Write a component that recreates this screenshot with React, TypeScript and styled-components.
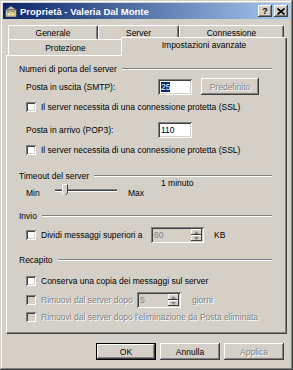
import styled, { createGlobalStyle } from 'styled-components';

const face = '#d4d0c8';
const shadow = '#808080';
const dark = '#404040';

const GlobalStyle = createGlobalStyle`
  html, body { margin: 0; padding: 0; background: ${face}; }
  body {
    font-family: 'Liberation Sans', Arial, sans-serif;
    font-size: 8.5px;
    color: #000;
  }
`;

const raised = `inset -1px -1px ${dark}, inset 1px 1px #fff, inset -2px -2px ${shadow}, inset 2px 2px ${face}`;
const sunken = `inset 1px 1px ${shadow}, inset -1px -1px #fff, inset 2px 2px ${dark}, inset -2px -2px ${face}`;

const Window = styled.div`
  box-sizing: border-box;
  width: 293px;
  height: 370px;
  padding: 3px;
  background: ${face};
  box-shadow: inset -1px -1px ${dark}, inset 1px 1px ${face}, inset -2px -2px ${shadow}, inset 2px 2px #fff;
  display: flex;
  flex-direction: column;
`;

const TitleBar = styled.div`
  height: 16px;
  display: flex;
  align-items: center;
  padding: 0 2px 0 1px;
  background: linear-gradient(to right, #0a246a, #a6caf0);
`;

const Title = styled.div`
  flex: 1;
  margin-left: 2px;
  color: #fff;
  font-weight: bold;
  font-size: 9.5px;
  white-space: nowrap;
`;

const CaptionButton = styled.div<{ $gap?: number }>`
  width: 14px;
  height: 12px;
  margin-left: ${(p) => p.$gap ?? 0}px;
  display: flex;
  align-items: center;
  justify-content: center;
  background: ${face};
  box-shadow: ${raised};
  font-weight: bold;
  font-size: 9px;
  line-height: 1;
`;

const Body = styled.div`
  flex: 1;
  display: flex;
  flex-direction: column;
  padding: 0 3px;
`;

const TabRow = styled.div<{ $h: number; $top: number }>`
  display: flex;
  align-items: flex-end;
  height: ${(p) => p.$h}px;
  margin-top: ${(p) => p.$top}px;
  padding-left: 2px;
`;

const Tab = styled.div<{ $w: number; $h: number; $active?: boolean }>`
  box-sizing: border-box;
  width: ${(p) => p.$w}px;
  height: ${(p) => p.$h}px;
  margin: ${(p) => (p.$active ? '0 0 -1px -2px' : '0')};
  position: relative;
  z-index: ${(p) => (p.$active ? 1 : 0)};
  display: flex;
  align-items: ${(p) => (p.$active ? 'flex-start' : 'center')};
  padding-top: ${(p) => (p.$active ? 2 : 0)}px;
  justify-content: center;
  background: ${face};
  border-top: 1px solid #fff;
  border-left: 1px solid #fff;
  border-right: 1px solid ${dark};
  border-radius: 2px 2px 0 0;
  box-shadow: inset -1px 0 ${shadow};
  white-space: nowrap;
`;

const Panel = styled.div`
  box-sizing: border-box;
  height: 279px;
  display: flex;
  flex-direction: column;
  padding: 0 14px 0 12px;
  border-top: 1px solid #fff;
  border-left: 1px solid #fff;
  border-right: 1px solid ${dark};
  border-bottom: 1px solid ${dark};
  box-shadow: inset -1px -1px ${shadow};
`;

const Legend = styled.div<{ $top: number }>`
  display: flex;
  align-items: center;
  height: 12px;
  margin-top: ${(p) => p.$top}px;
  white-space: nowrap;
  &::after {
    content: '';
    flex: 1;
    margin-left: 5px;
    border-top: 1px solid ${shadow};
    border-bottom: 1px solid #fff;
  }
`;

const Row = styled.div<{ $h: number; $top: number }>`
  display: flex;
  align-items: center;
  height: ${(p) => p.$h}px;
  margin-top: ${(p) => p.$top}px;
  padding-left: 7px;
  white-space: nowrap;
`;

const Label = styled.span<{ $w?: number; $gap?: number; $disabled?: boolean }>`
  width: ${(p) => (p.$w ? `${p.$w}px` : 'auto')};
  margin-left: ${(p) => p.$gap ?? 0}px;
  color: ${(p) => (p.$disabled ? shadow : '#000')};
  text-shadow: ${(p) => (p.$disabled ? '1px 1px #fff' : 'none')};
  flex-shrink: 0;
`;

const Check = styled.span<{ $disabled?: boolean }>`
  box-sizing: border-box;
  width: 10px;
  height: 10px;
  flex-shrink: 0;
  margin-right: 5px;
  background: ${(p) => (p.$disabled ? face : '#fff')};
  box-shadow: ${sunken};
`;

const Edit = styled.div<{ $w: number; $h?: number; $disabled?: boolean }>`
  box-sizing: border-box;
  width: ${(p) => p.$w}px;
  height: ${(p) => p.$h ?? 16}px;
  display: flex;
  align-items: center;
  padding: 2px 2px 2px 3px;
  background: ${(p) => (p.$disabled ? face : '#fff')};
  color: ${(p) => (p.$disabled ? shadow : '#000')};
  box-shadow: ${sunken};
  flex-shrink: 0;
`;

const EditText = styled.span`
  flex: 1;
`;

const Selected = styled.span`
  background: #0a246a;
  color: #fff;
`;

const Spin = styled.div`
  display: flex;
  flex-direction: column;
  width: 11px;
  height: 100%;
`;

const SpinButton = styled.div`
  flex: 1;
  display: flex;
  align-items: center;
  justify-content: center;
  background: ${face};
  box-shadow: inset -1px -1px ${dark}, inset 1px 1px #fff;
`;

const Arrow = ({ up }: { up?: boolean }) => (
  <svg width="5" height="3" viewBox="0 0 5 3">
    <path d={up ? 'M2.5 0 L5 3 L0 3 Z' : 'M0 0 L5 0 L2.5 3 Z'} fill={shadow} />
  </svg>
);

const Button = styled.div<{ $w: number; $disabled?: boolean; $default?: boolean }>`
  box-sizing: border-box;
  width: ${(p) => p.$w}px;
  height: 17px;
  display: flex;
  align-items: center;
  justify-content: center;
  background: ${face};
  border: ${(p) => (p.$default ? '1px solid #000' : 'none')};
  box-shadow: ${raised};
  color: ${(p) => (p.$disabled ? shadow : '#000')};
  text-shadow: ${(p) => (p.$disabled ? '1px 1px #fff' : 'none')};
  flex-shrink: 0;
`;

const ButtonBar = styled.div`
  display: flex;
  justify-content: flex-end;
  gap: 4px;
  margin-top: 9px;
  padding-right: 3px;
`;

const SliderRow = styled.div`
  display: grid;
  grid-template-columns: 29px 62px 11px 33px auto;
  grid-template-rows: 10px 12px;
  height: 22px;
  margin-top: -5px;
  padding-left: 7px;
  white-space: nowrap;
  line-height: 12px;
`;

const SliderEnd = styled.span<{ $col: number }>`
  grid-column: ${(p) => p.$col};
  grid-row: 2;
`;

const SliderValue = styled.span`
  grid-column: 5;
  grid-row: 1 / span 2;
  align-self: start;
`;

const Track = styled.div`
  position: relative;
  grid-column: 2;
  grid-row: 1 / span 2;
  align-self: end;
  height: 14px;
  margin-bottom: 1px;
  &::before {
    content: '';
    position: absolute;
    left: 0;
    right: 0;
    top: 5px;
    height: 1px;
    border-top: 1px solid ${shadow};
    border-bottom: 1px solid #fff;
    background: ${dark};
  }
`;

const Thumb = styled.svg`
  position: absolute;
  left: 7px;
  top: 0;
`;

const WindowIcon = () => (
  <svg width="14" height="13" viewBox="0 0 14 13">
    <path d="M1 5 L7 1 L13 5 Z" fill="#c0c0c0" stroke="#404040" strokeWidth="0.8" />
    <rect x="1.5" y="5" width="11" height="7" fill="#e8e8e8" stroke="#404040" strokeWidth="0.8" />
    <rect x="3" y="6.5" width="8" height="4.5" fill="#f4e9b0" stroke="#7a6a30" strokeWidth="0.6" />
    <path d="M3 6.5 L7 9 L11 6.5" fill="none" stroke="#7a6a30" strokeWidth="0.6" />
  </svg>
);

export default function App() {
  return (
    <>
      <GlobalStyle />
      <Window>
        <TitleBar>
          <WindowIcon />
          <Title>Proprietà - Valeria Dal Monte</Title>
          <CaptionButton>?</CaptionButton>
          <CaptionButton $gap={2}>
            <svg width="8" height="7" viewBox="0 0 8 7">
              <path d="M0.5 0.5 L7.5 6.5 M7.5 0.5 L0.5 6.5" stroke="#000" strokeWidth="1.6" />
            </svg>
          </CaptionButton>
        </TitleBar>
        <Body>
          <TabRow $h={14} $top={6}>
            <Tab $w={90} $h={14}>Generale</Tab>
            <Tab $w={81} $h={14}>Server</Tab>
            <Tab $w={105} $h={14}>Connessione</Tab>
          </TabRow>
          <TabRow $h={16} $top={0}>
            <Tab $w={115} $h={16}>Protezione</Tab>
            <Tab $w={166} $h={19} $active>Impostazioni avanzate</Tab>
          </TabRow>
          <Panel>
            <Legend $top={7}>Numeri di porta del server</Legend>
            <Row $h={17} $top={3}>
              <Label $w={132}>Posta in uscita (SMTP):</Label>
              <Edit $w={34}>
                <EditText>
                  <Selected>25</Selected>
                </EditText>
              </Edit>
              <Label $gap={9}>
                <Button $w={58} $disabled>Predefinito</Button>
              </Label>
            </Row>
            <Row $h={14} $top={5}>
              <Check />
              <Label>Il server necessita di una connessione protetta (SSL)</Label>
            </Row>
            <Row $h={16} $top={8}>
              <Label $w={132}>Posta in arrivo (POP3):</Label>
              <Edit $w={34}>
                <EditText>110</EditText>
              </Edit>
            </Row>
            <Row $h={14} $top={5}>
              <Check />
              <Label>Il server necessita di una connessione protetta (SSL)</Label>
            </Row>

            <Legend $top={13}>Timeout del server</Legend>
            <SliderRow>
              <SliderEnd $col={1}>Min</SliderEnd>
              <Track>
                <Thumb width="6" height="12" viewBox="0 0 6 12">
                  <path d="M0.5 0.5 H5.5 V9 L3 11.5 L0.5 9 Z" fill={face} />
                  <path d="M0.5 9 V0.5 H5.5" fill="none" stroke="#fff" />
                  <path d="M5.5 0.5 V9 L3 11.5" fill="none" stroke={dark} />
                  <path d="M0.5 9 L3 11.5" fill="none" stroke="#fff" />
                </Thumb>
              </Track>
              <SliderEnd $col={4}>Max</SliderEnd>
              <SliderValue>1 minuto</SliderValue>
            </SliderRow>

            <Legend $top={11}>Invio</Legend>
            <Row $h={16} $top={5}>
              <Check />
              <Label $w={110}>Dividi messaggi superiori a</Label>
              <Edit $w={53} $disabled>
                <EditText>60</EditText>
                <Spin>
                  <SpinButton>
                    <Arrow up />
                  </SpinButton>
                  <SpinButton>
                    <Arrow />
                  </SpinButton>
                </Spin>
              </Edit>
              <Label $gap={10}>KB</Label>
            </Row>

            <Legend $top={11}>Recapito</Legend>
            <Row $h={14} $top={8}>
              <Check />
              <Label>Conserva una copia dei messaggi sul server</Label>
            </Row>
            <Row $h={16} $top={4}>
              <Check $disabled />
              <Label $w={96} $disabled>Rimuovi dal server dopo</Label>
              <Edit $w={44} $disabled>
                <EditText>5</EditText>
                <Spin>
                  <SpinButton>
                    <Arrow up />
                  </SpinButton>
                  <SpinButton>
                    <Arrow />
                  </SpinButton>
                </Spin>
              </Edit>
              <Label $gap={11} $disabled>giorni</Label>
            </Row>
            <Row $h={14} $top={2}>
              <Check $disabled />
              <Label $disabled>Rimuovi dal server dopo l'eliminazione da Posta eliminata</Label>
            </Row>
          </Panel>
          <ButtonBar>
            <Button $w={60} $default>OK</Button>
            <Button $w={60}>Annulla</Button>
            <Button $w={60} $disabled>Applica</Button>
          </ButtonBar>
        </Body>
      </Window>
    </>
  );
}
